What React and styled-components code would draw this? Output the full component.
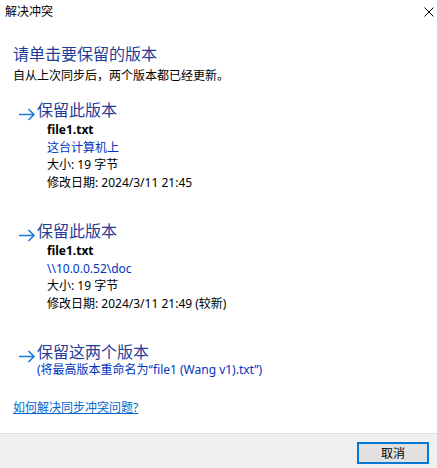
import styled, { createGlobalStyle } from "styled-components";

const GlobalStyle = createGlobalStyle`
  html, body, #root {
    margin: 0;
    height: 100%;
  }
  body {
    background: #ffffff;
    font-family: "Segoe UI", "Noto Sans", "Noto Sans CJK SC", sans-serif;
    color: #000000;
  }
`;

const options = [
  {
    label: "保留此版本",
    lines: [
      { text: "file1.txt", kind: "name" },
      { text: "这台计算机上", kind: "place" },
      { text: "大小: 19 字节" },
      { text: "修改日期: 2024/3/11 21:45" },
    ],
  },
  {
    label: "保留此版本",
    lines: [
      { text: "file1.txt", kind: "name" },
      { text: "\\\\10.0.0.52\\doc", kind: "place" },
      { text: "大小: 19 字节" },
      { text: "修改日期: 2024/3/11 21:49 (较新)" },
    ],
  },
];

const Arrow = () => (
  <svg width="18" height="21" viewBox="0 0 18 21">
    <path
      d="M1 14.5 H16 M10.5 9 L16 14.5 L10.5 20"
      stroke="#1979d6"
      strokeWidth="1.5"
      fill="none"
    />
  </svg>
);

const CloseIcon = () => (
  <svg width="10" height="10" viewBox="0 0 10 10">
    <path d="M0.5 0.5 L9.5 9.5 M9.5 0.5 L0.5 9.5" stroke="#000" strokeWidth="1" />
  </svg>
);

const App = () => {
  return (
    <>
      <GlobalStyle />
      <Window>
        <TitleBar>
          <TitleText>解决冲突</TitleText>
          <CloseButton>
            <CloseIcon />
          </CloseButton>
        </TitleBar>
        <Main>
          <Heading>请单击要保留的版本</Heading>
          <Subtitle>自从上次同步后，两个版本都已经更新。</Subtitle>
          <OptionList>
            {options.map((opt, i) => (
              <Option key={i}>
                <OptionHeader>
                  <Arrow />
                  <OptionLabel>{opt.label}</OptionLabel>
                </OptionHeader>
                <Details>
                  {opt.lines.map((line, j) => (
                    <DetailLine key={j} $kind={line.kind}>
                      {line.text}
                    </DetailLine>
                  ))}
                </Details>
              </Option>
            ))}
            <Option>
              <OptionHeader>
                <Arrow />
                <OptionLabel>保留这两个版本</OptionLabel>
              </OptionHeader>
              <OptionNote>(将最高版本重命名为“file1 (Wang v1).txt”)</OptionNote>
            </Option>
          </OptionList>
          <HelpLink href="#">如何解决同步冲突问题?</HelpLink>
        </Main>
        <Footer>
          <CancelButton>取消</CancelButton>
        </Footer>
      </Window>
    </>
  );
};

export default App;

const Window = styled.div`
  height: 100%;
  display: flex;
  flex-direction: column;
  box-sizing: border-box;
`;

const TitleBar = styled.div`
  height: 24px;
  display: flex;
  align-items: center;
  justify-content: space-between;
  padding: 0 2px 0 5px;
`;

const TitleText = styled.span`
  font-size: 12px;
  line-height: 24px;
`;

const CloseButton = styled.div`
  width: 10px;
  height: 10px;
  margin-right: 1px;
  display: flex;
`;

const Main = styled.div`
  flex: 1;
  padding: 0 13px;
`;

const Heading = styled.div`
  margin-top: 20px;
  font-size: 16px;
  line-height: 20px;
  color: #1f3d99;
`;

const Subtitle = styled.div`
  margin-top: 4px;
  font-size: 12px;
  line-height: 16px;
`;

const OptionList = styled.div`
  margin-top: 16px;
  display: flex;
  flex-direction: column;
  gap: 30px;
  padding-left: 5px;
`;

const Option = styled.div`
  display: flex;
  flex-direction: column;
`;

const OptionHeader = styled.div`
  display: flex;
  align-items: flex-start;
  gap: 1px;
  height: 20px;
`;

const OptionLabel = styled.span`
  font-size: 16px;
  line-height: 20px;
  color: #1f3d99;
`;

const Details = styled.div`
  margin-top: 1px;
  padding-left: 29px;
`;

const DetailLine = styled.div`
  font-size: 12px;
  line-height: 17.5px;
  font-weight: ${(p) => (p.$kind === "name" ? 700 : 400)};
  color: ${(p) => (p.$kind === "place" ? "#0033bc" : "#000000")};
`;

const OptionNote = styled.div`
  margin-top: 1px;
  padding-left: 19px;
  font-size: 12px;
  line-height: 14px;
  color: #0033bc;
`;

const HelpLink = styled.a`
  display: inline-block;
  margin-top: 23px;
  font-size: 12px;
  line-height: 16px;
  color: #0066cc;
  text-decoration: underline;
`;

const Footer = styled.div`
  border-top: 1px solid #dfdfdf;
  background: #f0f0f0;
  display: flex;
  justify-content: flex-end;
  align-items: flex-start;
  padding: 8px 8px 0 0;
  box-sizing: content-box;
  flex-shrink: 0;
  height: 26px;
`;

const CancelButton = styled.button`
  width: 72px;
  height: 22px;
  border: 2px solid #0078d7;
  background: #e1e1e1;
  font-family: "Segoe UI", "Noto Sans", "Noto Sans CJK SC", sans-serif;
  font-size: 12px;
  color: #000000;
  padding: 0;
  box-sizing: border-box;
`;
